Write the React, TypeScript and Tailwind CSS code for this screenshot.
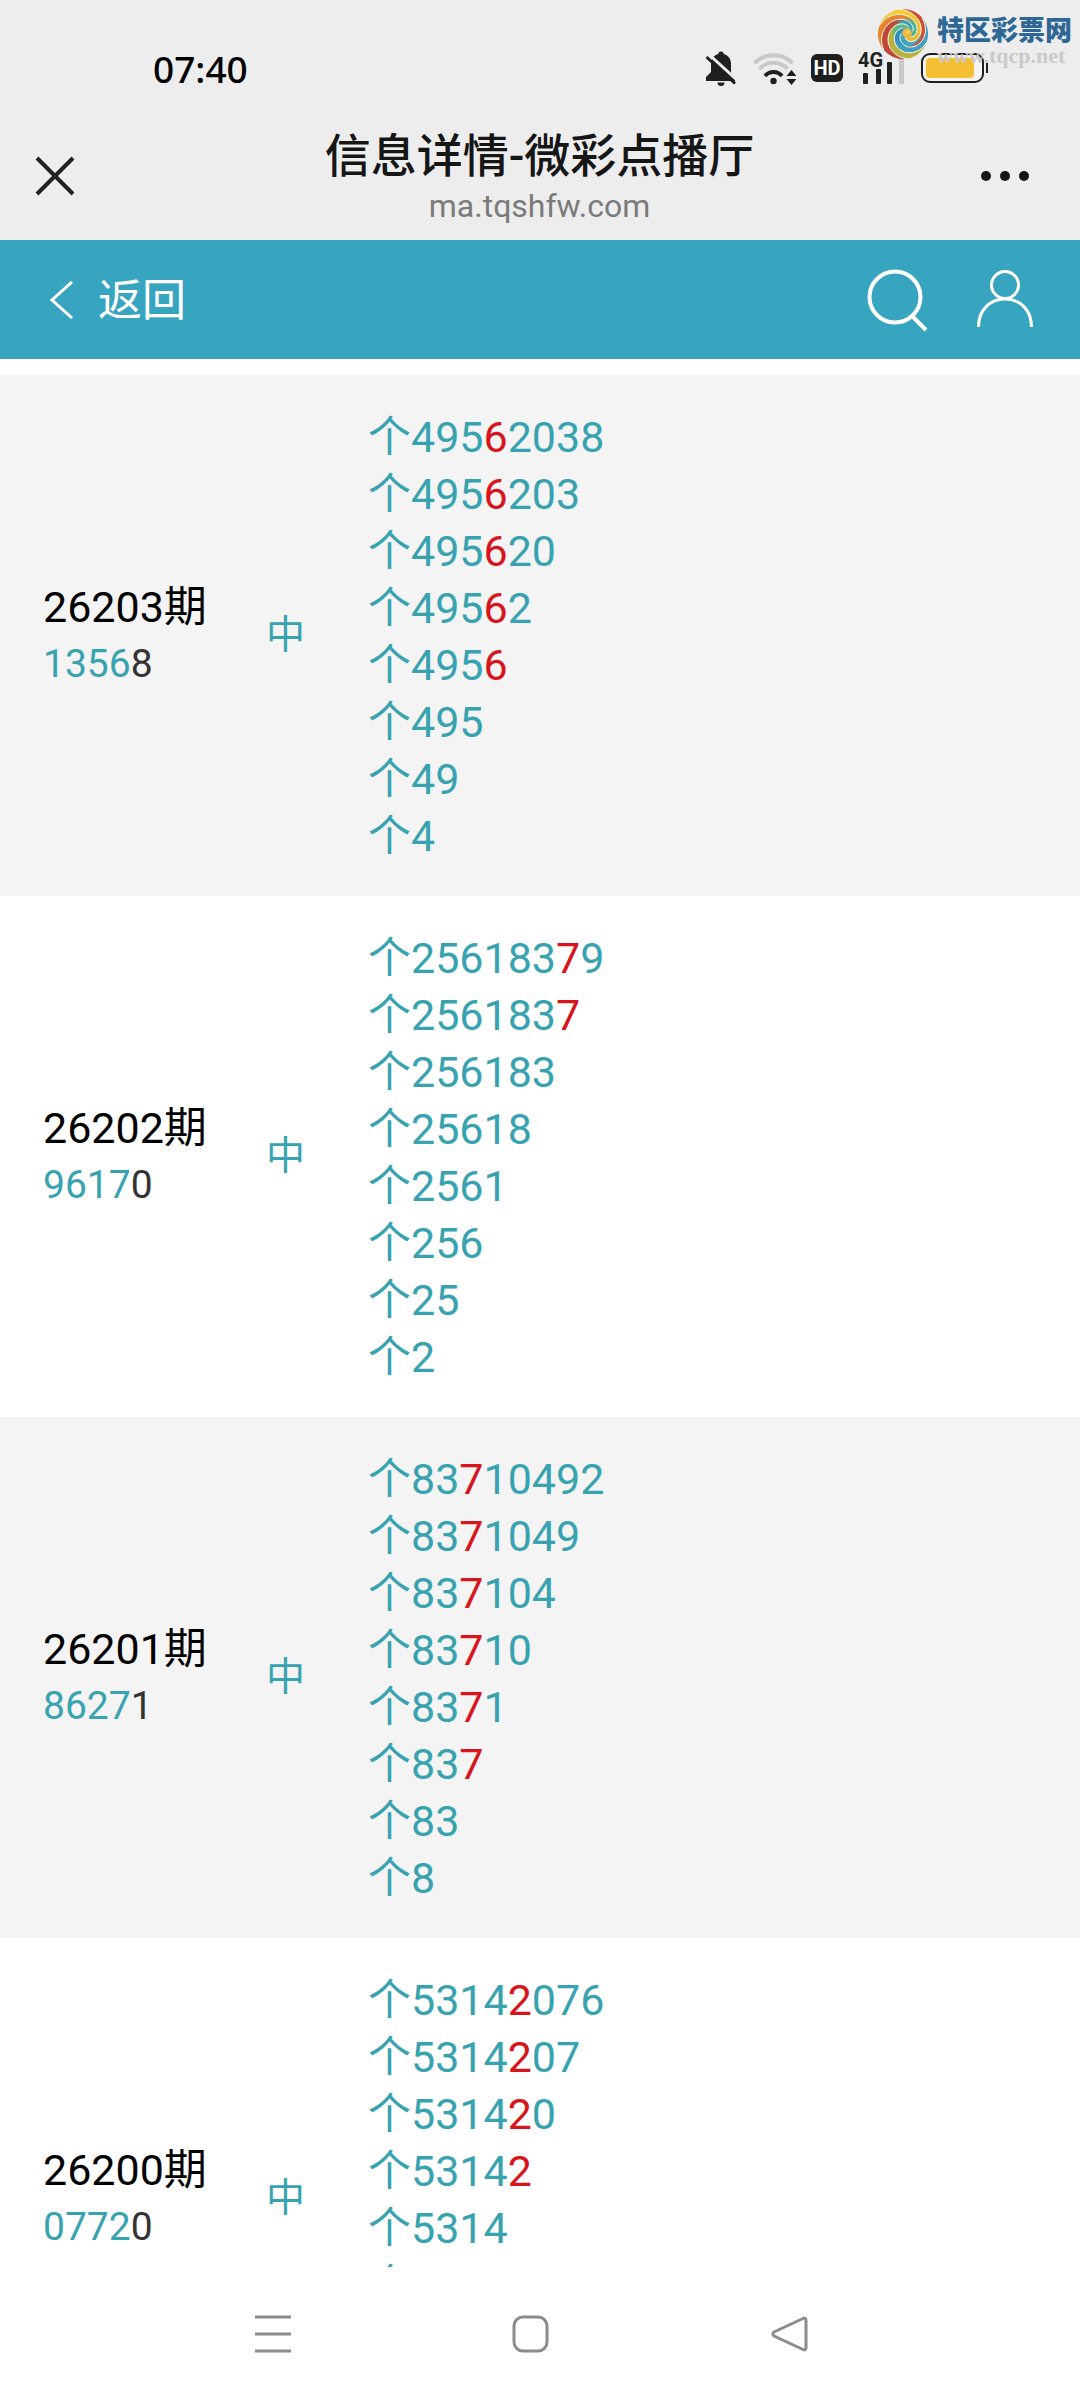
import { ReactNode } from 'react';

interface Draw {
  issue: string;
  result: string;
  // digits tried for the units place, longest list
  digits: string;
  hit: string;
}

const draws: Draw[] = [
  { issue: '26203', result: '13568', digits: '49562038', hit: '6' },
  { issue: '26202', result: '96170', digits: '25618379', hit: '7' },
  { issue: '26201', result: '86271', digits: '83710492', hit: '7' },
  { issue: '26200', result: '07720', digits: '53142076', hit: '2' },
];

function StatusIcons() {
  return (
    <div className="flex h-9 items-center gap-[15px] text-[#1f1f1f]">
      <svg width="32" height="36" viewBox="0 0 32 36" aria-label="静音">
        <path
          d="M16 1.5c1.600 0 2.700 1 2.700 2.600 4.700 1.300 7.300 5 7.300 9.900v8.500l4 5V31H1v-4l5-5v-8c0-4.900 2.600-8.600 7.300-9.900C13.300 2.500 14.400 1.500 16 1.500z"
          fill="currentColor"
        />
        <path d="M12.500 32.500h7a3.500 3.500 0 0 1-7 0z" fill="currentColor" />
        <path d="M4 4.500 33 31" stroke="#ededed" strokeWidth="3" />
        <path d="M1.500 7 30 33.500" stroke="currentColor" strokeWidth="3" />
      </svg>
      <svg width="44" height="36" viewBox="0 0 44 36" fill="none" aria-label="无线网络">
        <path d="M2.500 13A27 27 0 0 1 40.500 13" stroke="#c8c8c8" strokeWidth="4" />
        <path d="M7.500 19A19 19 0 0 1 35.500 19" stroke="#c8c8c8" strokeWidth="4" />
        <path d="M13 26A11 11 0 0 1 30 26" stroke="currentColor" strokeWidth="4" />
        <circle cx="21.500" cy="31" r="3.200" fill="currentColor" />
        <path d="m39.500 20 5 6h-10zM39.500 35l5-6h-10z" fill="currentColor" />
      </svg>
      <span className="flex h-7 w-8 items-center justify-center rounded-md bg-[#1f1f1f] font-['Roboto',sans-serif] text-[20px] font-bold leading-7 text-white">
        HD
      </span>
      <svg width="48" height="36" viewBox="0 0 48 36" className="overflow-visible" aria-label="4G">
        <text x="0" y="17" fontSize="20" fontWeight="700" fontFamily="Roboto, sans-serif" fill="currentColor">
          4G
        </text>
        <g fill="currentColor">
          <rect x="5" y="23" width="5" height="11" rx="1" />
          <rect x="18" y="19" width="5" height="15" rx="1" />
          <rect x="29" y="12" width="5" height="22" rx="1" />
        </g>
        <rect x="41" y="6" width="5" height="28" rx="1" fill="#c8c8c8" />
      </svg>
      <svg width="68" height="30" viewBox="0 0 68 30" aria-label="电量">
        <rect x="1" y="1" width="61" height="28" rx="8" fill="#f4f3f1" stroke="currentColor" strokeWidth="2" />
        <rect x="5" y="5" width="48" height="20" rx="4" fill="#f5bf33" />
        <path d="M66 10v10" stroke="currentColor" strokeWidth="2" />
      </svg>
    </div>
  );
}

// arms of the lottery logo: angle at the rim, inner colour, outer colour
const arms = [
  { angle: 20, inner: '#2f8fc0', outer: '#3f9fc4' },
  { angle: -40, inner: '#3aa7c4', outer: '#cf4a2f' },
  { angle: -100, inner: '#e9b93c', outer: '#f6c72f' },
  { angle: -160, inner: '#49b49c', outer: '#e8842f' },
  { angle: -220, inner: '#3ba3b8', outer: '#bf4638' },
  { angle: -280, inner: '#5cb68a', outer: '#b9b13c' },
];

// spiral from the rim to the centre; turns clockwise on the way in
function spiral(rimAngle: number) {
  const points: string[] = [];
  for (let i = 0; i <= 30; i++) {
    const t = i / 30;
    const radius = 25 - 24 * t;
    const a = ((rimAngle + 260 * t) * Math.PI) / 180;
    const x = 26 + 5 * t + radius * Math.cos(a);
    const y = 26 - 2 * t + radius * Math.sin(a);
    points.push(`${x.toFixed(1)} ${y.toFixed(1)}`);
  }
  return points;
}

function Swirl() {
  return (
    <svg width="52" height="52" viewBox="0 0 52 52">
      <defs>
        {arms.map((arm) => (
          <radialGradient key={arm.angle} id={`arm${arm.angle}`} gradientUnits="userSpaceOnUse" cx="30" cy="25" r="26">
            <stop offset="0%" stopColor="#f5b52e" />
            <stop offset="14%" stopColor="#f5b52e" />
            <stop offset="22%" stopColor={arm.inner} />
            <stop offset="46%" stopColor={arm.inner} />
            <stop offset="60%" stopColor={arm.outer} />
            <stop offset="100%" stopColor={arm.outer} />
          </radialGradient>
        ))}
      </defs>
      {arms.map((arm) => (
        <path
          key={arm.angle}
          d={`M${spiral(arm.angle).join('L')}L${spiral(arm.angle - 60).reverse().join('L')}A25 25 0 0 1 ${spiral(arm.angle)[0]}Z`}
          fill={`url(#arm${arm.angle})`}
        />
      ))}
      {arms.map((arm) => (
        <path key={arm.angle} d={`M${spiral(arm.angle).slice(0, 25).join('L')}`} fill="none" stroke="#fdf6e3" strokeWidth="1" />
      ))}
    </svg>
  );
}

function Watermark() {
  return (
    <div className="absolute right-2 top-2 flex items-start gap-2">
      <Swirl />
      <div className="flex flex-col">
        <span className="pt-2 text-[27px] font-black leading-[30px] text-[#2d6796]">特区彩票网</span>
        <span className="font-['Liberation_Serif',serif] text-[22px] font-bold leading-5 text-[#c9c9cc]">
          www.tqcp.net
        </span>
      </div>
    </div>
  );
}

function IconButton({ label, children }: { label: string; children: ReactNode }) {
  return (
    <button type="button" aria-label={label} className="flex items-center justify-center">
      {children}
    </button>
  );
}

function DrawRow({ draw }: { draw: Draw }) {
  const tries = draw.digits.split('').map((_, i) => draw.digits.slice(0, draw.digits.length - i));

  return (
    <tr className="odd:bg-[#f4f4f4] even:bg-white">
      <td className="w-[244px] pl-[43px] align-middle">
        <div className="text-[43px] leading-[57px] text-black">{draw.issue}期</div>
        <div className="text-[39px] leading-[57px] text-[#38a3b0]">
          {draw.result.slice(0, 4)}
          <span className="text-[#333]">{draw.result.slice(4)}</span>
        </div>
      </td>
      <td className="w-[124px] pl-[22px] align-middle text-[39px] leading-[57px] text-[#38a3b0]">中</td>
      <td className="pb-[31px] pt-[34px] text-[43px] leading-[57px] text-[#38a3b0]">
        {tries.map((digits) => (
          <div key={digits}>
            个
            {digits.split('').map((d) => (
              <span key={d} className={d === draw.hit ? 'text-[#d8141c]' : undefined}>
                {d}
              </span>
            ))}
          </div>
        ))}
      </td>
    </tr>
  );
}

export default function App() {
  return (
    <div className="flex h-screen flex-col bg-white font-['Roboto','Noto_Sans_CJK_SC',sans-serif]">
      <div className="relative flex h-[122px] shrink-0 justify-between bg-[#ededed] pl-[153px] pr-[91px] pt-[50px]">
        <time className="font-['Noto_Sans',sans-serif] text-[37px] font-medium leading-[38px] text-black">07:40</time>
        <StatusIcons />
        <Watermark />
      </div>

      <header className="flex h-[118px] shrink-0 items-start justify-between bg-[#ededed] pl-[22px] pr-[43px] pt-0.5">
        <IconButton label="关闭">
          <svg width="64" height="100" viewBox="0 0 64 100" stroke="#222" strokeWidth="4">
            <path d="m15 34 36 36M51 34 15 70" />
          </svg>
        </IconButton>
        <div className="pl-5 text-center">
          <h1 className="text-[46px] font-medium leading-[64px] text-[#161616]">信息详情-微彩点播厅</h1>
          <p className="text-[32px] leading-9 text-[#7a7a7a]">ma.tqshfw.com</p>
        </div>
        <IconButton label="更多">
          <svg width="64" height="100" viewBox="0 0 64 100" fill="#161616">
            <circle cx="13" cy="52" r="5" />
            <circle cx="32" cy="52" r="5" />
            <circle cx="51" cy="52" r="5" />
          </svg>
        </IconButton>
      </header>

      <nav className="flex h-[119px] shrink-0 items-center justify-between bg-[#38a5c0] pl-[50px] pr-[46px] text-white">
        <a href="#back" className="flex items-center gap-6 pt-0.5 text-[44px] leading-[60px]">
          <svg width="24" height="40" viewBox="0 0 24 40" fill="none" stroke="currentColor" strokeWidth="3">
            <path d="M22 1 2 19l20 18" />
          </svg>
          返回
        </a>
        <div className="flex items-center gap-[46px]">
          <IconButton label="搜索">
            <svg width="64" height="64" viewBox="0 0 64 64" fill="none" stroke="currentColor" strokeWidth="4">
              <circle cx="29" cy="29" r="25.500" />
              <path d="m46 48 14 14" />
            </svg>
          </IconButton>
          <IconButton label="我的">
            <svg width="58" height="60" viewBox="0 0 58 60" fill="none" stroke="currentColor" strokeWidth="3">
              <circle cx="29" cy="15" r="13.500" />
              <path d="M2.500 57C2.500 40 14 29 29 29s26.500 11 26.500 28" />
            </svg>
          </IconButton>
        </div>
      </nav>

      <main className="min-h-0 flex-1 overflow-hidden pt-4">
        <table className="w-full border-collapse">
          <tbody>
            {draws.map((draw) => (
              <DrawRow key={draw.issue} draw={draw} />
            ))}
          </tbody>
        </table>
      </main>

      <footer className="flex h-[133px] shrink-0 items-center justify-center gap-[218px] bg-white pr-[18px] text-[#8c8c8c]">
        <IconButton label="菜单">
          <svg width="40" height="40" viewBox="0 0 40 40" stroke="currentColor" strokeWidth="3">
            <path d="M2 3h36M2 20h36M2 37h36" />
          </svg>
        </IconButton>
        <IconButton label="主页">
          <svg width="40" height="40" viewBox="0 0 40 40" fill="none" stroke="currentColor" strokeWidth="3">
            <rect x="3" y="3" width="33" height="34" rx="9" />
          </svg>
        </IconButton>
        <IconButton label="后退">
          <svg width="40" height="40" viewBox="0 0 40 40" fill="none" stroke="currentColor" strokeWidth="3">
            <path d="M34 4.500c1.500-1 3 0 3 1.500v28c0 1.500-1.500 2.500-3 1.500L5 22c-1.500-1-1.500-3 0-4z" />
          </svg>
        </IconButton>
      </footer>
    </div>
  );
}
